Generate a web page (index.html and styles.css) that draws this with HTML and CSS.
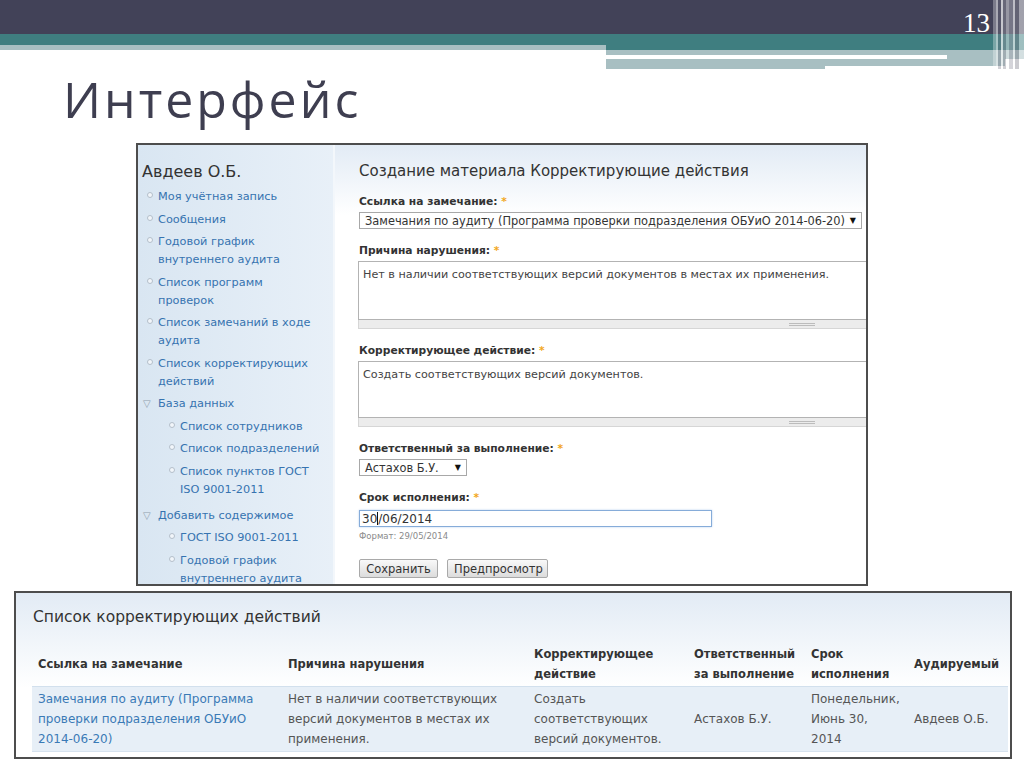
FILE: index.html
```html
<!DOCTYPE html>
<html>
<head>
  <meta charset="utf-8">
  <title>Интерфейс</title>
  <link rel="stylesheet" href="styles.css">
</head>
<body>
  <div class="slide">
    <div class="slide-top">
      <div class="top-left">
        <div class="bar-dark"></div>
        <div class="bar-teal"></div>
        <div class="bar-light"></div>
      </div>
      <div class="top-right">
        <div class="bar-dark"><span class="slide-num">13</span></div>
        <div class="bar-teal"></div>
        <div class="bar-light"></div>
        <div class="rule-row">
          <div class="rule-white"></div>
          <div class="rule-light"></div>
        </div>
        <div class="tail-row">
          <div class="tail-long"></div>
          <div class="tail-short"></div>
        </div>
      </div>
      <div class="edge-stripes"></div>
    </div>

    <h1 class="slide-title">Интерфейс</h1>

    <!-- Drupal form screenshot -->
    <div class="panel">
      <div class="sidebar">
        <h2 class="user-name">Авдеев О.Б.</h2>
        <ul class="menu">
          <li><a href="#">Моя учётная запись</a></li>
          <li><a href="#">Сообщения</a></li>
          <li><a href="#">Годовой график внутреннего аудита</a></li>
          <li><a href="#">Список программ проверок</a></li>
          <li><a href="#">Список замечаний в ходе аудита</a></li>
          <li><a href="#">Список корректирующих действий</a></li>
          <li class="expanded"><a href="#">База данных</a>
            <ul class="submenu">
              <li><a href="#">Список сотрудников</a></li>
              <li><a href="#">Список подразделений</a></li>
              <li><a href="#">Список пунктов ГОСТ ISO 9001-2011</a></li>
            </ul>
          </li>
          <li class="expanded"><a href="#">Добавить содержимое</a>
            <ul class="submenu">
              <li><a href="#">ГОСТ ISO 9001-2011</a></li>
              <li><a href="#">Годовой график внутреннего аудита</a></li>
            </ul>
          </li>
        </ul>
      </div>

      <div class="content">
        <h2 class="page-title">Создание материала Корректирующие действия</h2>

        <div class="field">
          <label>Ссылка на замечание: <span class="req">*</span></label>
          <div class="select select-wide">
            <span>Замечания по аудиту (Программа проверки подразделения ОБУиО 2014-06-20)</span>
            <span class="arrow">&#9660;</span>
          </div>
        </div>

        <div class="field">
          <label>Причина нарушения: <span class="req">*</span></label>
          <div class="area">
            <textarea>Нет в наличии соответствующих версий документов в местах их применения.</textarea>
            <div class="grip"><span class="grip-lines"></span></div>
          </div>
        </div>

        <div class="field">
          <label>Корректирующее действие: <span class="req">*</span></label>
          <div class="area area-short">
            <textarea>Создать соответствующих версий документов.</textarea>
            <div class="grip"><span class="grip-lines"></span></div>
          </div>
        </div>

        <div class="field">
          <label>Ответственный за выполнение: <span class="req">*</span></label>
          <div class="select select-small">
            <span>Астахов Б.У.</span>
            <span class="arrow">&#9660;</span>
          </div>
        </div>

        <div class="field field-date">
          <label>Срок исполнения: <span class="req">*</span></label>
          <div class="date-input">30<span class="caret"></span>/06/2014</div>
          <div class="hint">Формат: 29/05/2014</div>
        </div>

        <div class="actions">
          <button class="btn btn-save">Сохранить</button>
          <button class="btn btn-preview">Предпросмотр</button>
        </div>
      </div>
    </div>

    <!-- list view screenshot -->
    <div class="list-panel">
      <h2 class="list-title">Список корректирующих действий</h2>
      <table class="list-table">
        <colgroup>
          <col class="col-ref">
          <col class="col-reason">
          <col class="col-action">
          <col class="col-owner">
          <col class="col-due">
          <col class="col-audited">
        </colgroup>
        <thead>
          <tr>
            <th>Ссылка на замечание</th>
            <th>Причина нарушения</th>
            <th>Корректирующее действие</th>
            <th>Ответственный за выполнение</th>
            <th>Срок исполнения</th>
            <th>Аудируемый</th>
          </tr>
        </thead>
        <tbody>
          <tr>
            <td><a href="#">Замечания по аудиту (Программа проверки подразделения ОБУиО 2014-06-20)</a></td>
            <td>Нет в наличии соответствующих версий документов в местах их применения.</td>
            <td>Создать соответствующих версий документов.</td>
            <td>Астахов Б.У.</td>
            <td>Понедельник, Июнь 30, 2014</td>
            <td>Авдеев О.Б.</td>
          </tr>
        </tbody>
      </table>
    </div>
  </div>
</body>
</html>
```

FILE: styles.css
```css
/* General */
body {
  margin: 0;
  background-color: #ffffff;
  font-family: "DejaVu Sans", Verdana, sans-serif;
}

.slide {
  width: 1024px;
  height: 768px;
  overflow: hidden;
}

/* Slide header stripes */
.slide-top {
  position: relative;
  display: flex;
  height: 69px;
}

.top-left {
  width: 606px;
  display: flex;
  flex-direction: column;
}

.top-right {
  flex: 1;
  display: flex;
  flex-direction: column;
}

.bar-dark {
  height: 34px;
  background-color: #424258;
}

.bar-teal {
  background-color: #3f7e80;
}

.bar-light {
  background-color: #a8bfc2;
}

.top-left .bar-teal {
  height: 11px;
}

.top-left .bar-light {
  height: 5px;
}

.top-right .bar-dark {
  display: flex;
  justify-content: flex-end;
  padding: 10px 34px 0 0;
  box-sizing: border-box;
}

.top-right .bar-teal {
  height: 16px;
}

.top-right .bar-light {
  height: 5px;
}

.slide-num {
  font-family: "Liberation Serif", "Times New Roman", serif;
  font-size: 27px;
  line-height: 27px;
  color: #ffffff;
}

.rule-row {
  display: flex;
  height: 4px;
}

.rule-white {
  width: 341px;
  background-color: #ffffff;
}

.rule-light {
  flex: 1;
  background-color: #a8bfc2;
}

.tail-row {
  display: flex;
  align-items: flex-start;
}

.tail-long {
  width: 219px;
  height: 10px;
  background-color: #a8bfc2;
}

.tail-short {
  width: 180px;
  height: 7px;
  background-color: #a8bfc2;
}

.edge-stripes {
  position: absolute;
  top: 0;
  right: 0;
  width: 31px;
  height: 69px;
  background: linear-gradient(to right,
    rgba(255, 255, 255, 0.30) 0 3px,
    rgba(255, 255, 255, 0.55) 3px 5px,
    rgba(120, 120, 135, 0.35) 5px 8px,
    rgba(255, 255, 255, 0.70) 8px 10px,
    rgba(150, 150, 160, 0.45) 10px 13px,
    rgba(255, 255, 255, 0.45) 13px 16px,
    rgba(170, 170, 180, 0.50) 16px 20px,
    rgba(255, 255, 255, 0.65) 20px 22px,
    rgba(140, 140, 150, 0.45) 22px 26px,
    rgba(255, 255, 255, 0.50) 26px 31px);
}

.slide-title {
  margin: 5px 0 19px 63px;
  font-family: "Open Sans", sans-serif;
  font-size: 50px;
  line-height: 50px;
  font-weight: normal;
  letter-spacing: 3px;
  color: #3e3e50;
}

/* Form panel */
.panel {
  display: flex;
  width: 732px;
  height: 443px;
  margin: 0 0 5px 136px;
  border: 2px solid #4d4d4d;
  box-sizing: border-box;
  overflow: hidden;
}

.sidebar {
  flex-shrink: 0;
  width: 197px;
  padding: 17px 12px 0 4px;
  box-sizing: border-box;
  border-right: 2px solid #f3f7fb;
  background: linear-gradient(to right, #d9e6f2, #e8f0f8);
}

.user-name {
  margin: 0 0 6px;
  font-size: 16px;
  line-height: 20px;
  font-weight: normal;
  color: #333333;
}

.menu,
.submenu {
  list-style: none;
  margin: 0;
  padding: 0 0 0 16px;
}

.submenu {
  margin-top: 4.5px;
  padding-left: 22px;
}

.menu li {
  position: relative;
  margin-bottom: 4.5px;
  font-size: 11.3px;
  line-height: 18px;
}

.submenu li:last-child {
  margin-bottom: 8px;
}

.menu a {
  color: #3673b0;
  text-decoration: none;
}

.menu li::before {
  content: "";
  position: absolute;
  left: -11px;
  top: 4px;
  width: 4px;
  height: 4px;
  border: 1px solid #b4bfca;
  border-radius: 50%;
  background-color: #f2f6fa;
}

.menu li.expanded::before {
  content: "\25BD";
  left: -15px;
  top: 0;
  width: auto;
  height: auto;
  border: none;
  background: none;
  font-size: 10px;
  color: #8f9eae;
}

.content {
  flex: 1;
  min-width: 0;
  padding: 16px 0 0 24px;
  background: linear-gradient(#e2ebf5, #ffffff 70px);
}

.page-title {
  margin: 0 0 13px;
  font-size: 15px;
  line-height: 20px;
  font-weight: normal;
  color: #333333;
}

.field {
  margin-bottom: 14px;
}

.field label {
  display: block;
  margin-bottom: 2px;
  font-size: 10.7px;
  line-height: 16px;
  font-weight: bold;
  color: #333333;
}

.req {
  color: #f2a71c;
}

.select {
  display: flex;
  align-items: center;
  height: 17px;
  padding: 0 5px;
  box-sizing: border-box;
  border: 1px solid #a8a8a8;
  background-color: #ffffff;
  font-size: 11.4px;
  color: #333333;
}

.select .arrow {
  margin-left: auto;
  font-size: 8px;
  color: #111111;
}

.select-wide {
  width: 503px;
}

.select-small {
  width: 108px;
}

.area {
  width: 888px;
  margin-left: -1px;
}

.area textarea {
  display: block;
  width: 100%;
  height: 59px;
  margin: 0;
  padding: 5px 4px;
  box-sizing: border-box;
  border: 1px solid #b3b3b3;
  resize: none;
  overflow: hidden;
  font-family: "DejaVu Sans", Verdana, sans-serif;
  font-size: 11.2px;
  line-height: 16px;
  color: #444444;
}

.area-short textarea {
  height: 57px;
}

.grip {
  display: flex;
  justify-content: center;
  align-items: center;
  height: 8px;
  border: 1px solid #d6d6d6;
  border-top: none;
  background-color: #ececec;
}

.grip-lines {
  width: 26px;
  height: 1px;
  border-top: 1px solid #bcbcbc;
  border-bottom: 1px solid #bcbcbc;
}

.field-date {
  margin-bottom: 18px;
}

.field-date label {
  margin-bottom: 4px;
}

.date-input {
  display: flex;
  align-items: center;
  width: 353px;
  height: 17px;
  padding: 0 2px;
  box-sizing: border-box;
  border: 1px solid #86acd9;
  box-shadow: 0 0 2px #b9d1ef;
  font-size: 12px;
  color: #333333;
}

.caret {
  width: 1px;
  height: 13px;
  background-color: #111111;
}

.hint {
  margin-top: 4px;
  font-size: 8.5px;
  line-height: 10px;
  color: #8a8a8a;
}

.actions {
  display: flex;
  gap: 9px;
}

.btn {
  height: 19px;
  padding: 0 6px;
  border: 1px solid #a9a9a9;
  border-radius: 2px;
  background: linear-gradient(#f9f9f9, #dcdcdc);
  font-family: "DejaVu Sans", Verdana, sans-serif;
  font-size: 11.5px;
  color: #333333;
}

.btn-save {
  width: 79px;
}

.btn-preview {
  width: 101px;
}

/* List panel */
.list-panel {
  width: 998px;
  height: 168px;
  margin-left: 14px;
  padding: 14px 0 0 16px;
  box-sizing: border-box;
  border: 2px solid #4d4d4d;
  background: linear-gradient(#e2ebf5, #ffffff 95px);
  overflow: hidden;
}

.list-title {
  margin: 0 0 15px 1px;
  font-size: 15.5px;
  line-height: 20px;
  font-weight: normal;
  color: #333333;
}

.list-table {
  width: 976px;
  border-collapse: collapse;
  table-layout: fixed;
}

.col-ref { width: 250px; }
.col-reason { width: 246px; }
.col-action { width: 160px; }
.col-owner { width: 117px; }
.col-due { width: 103px; }
.col-audited { width: 100px; }

.list-table th {
  padding: 2px 6px;
  border-bottom: 1px solid #d2e0ed;
  text-align: left;
  font-size: 11.5px;
  line-height: 20px;
  font-weight: bold;
  color: #333333;
}

.list-table td {
  padding: 2px 6px;
  border-bottom: 1px solid #d6e2ee;
  background-color: #e7eff7;
  font-size: 12px;
  line-height: 20px;
  color: #555555;
}

.list-table td a {
  color: #3a7ab6;
  text-decoration: none;
}
```
